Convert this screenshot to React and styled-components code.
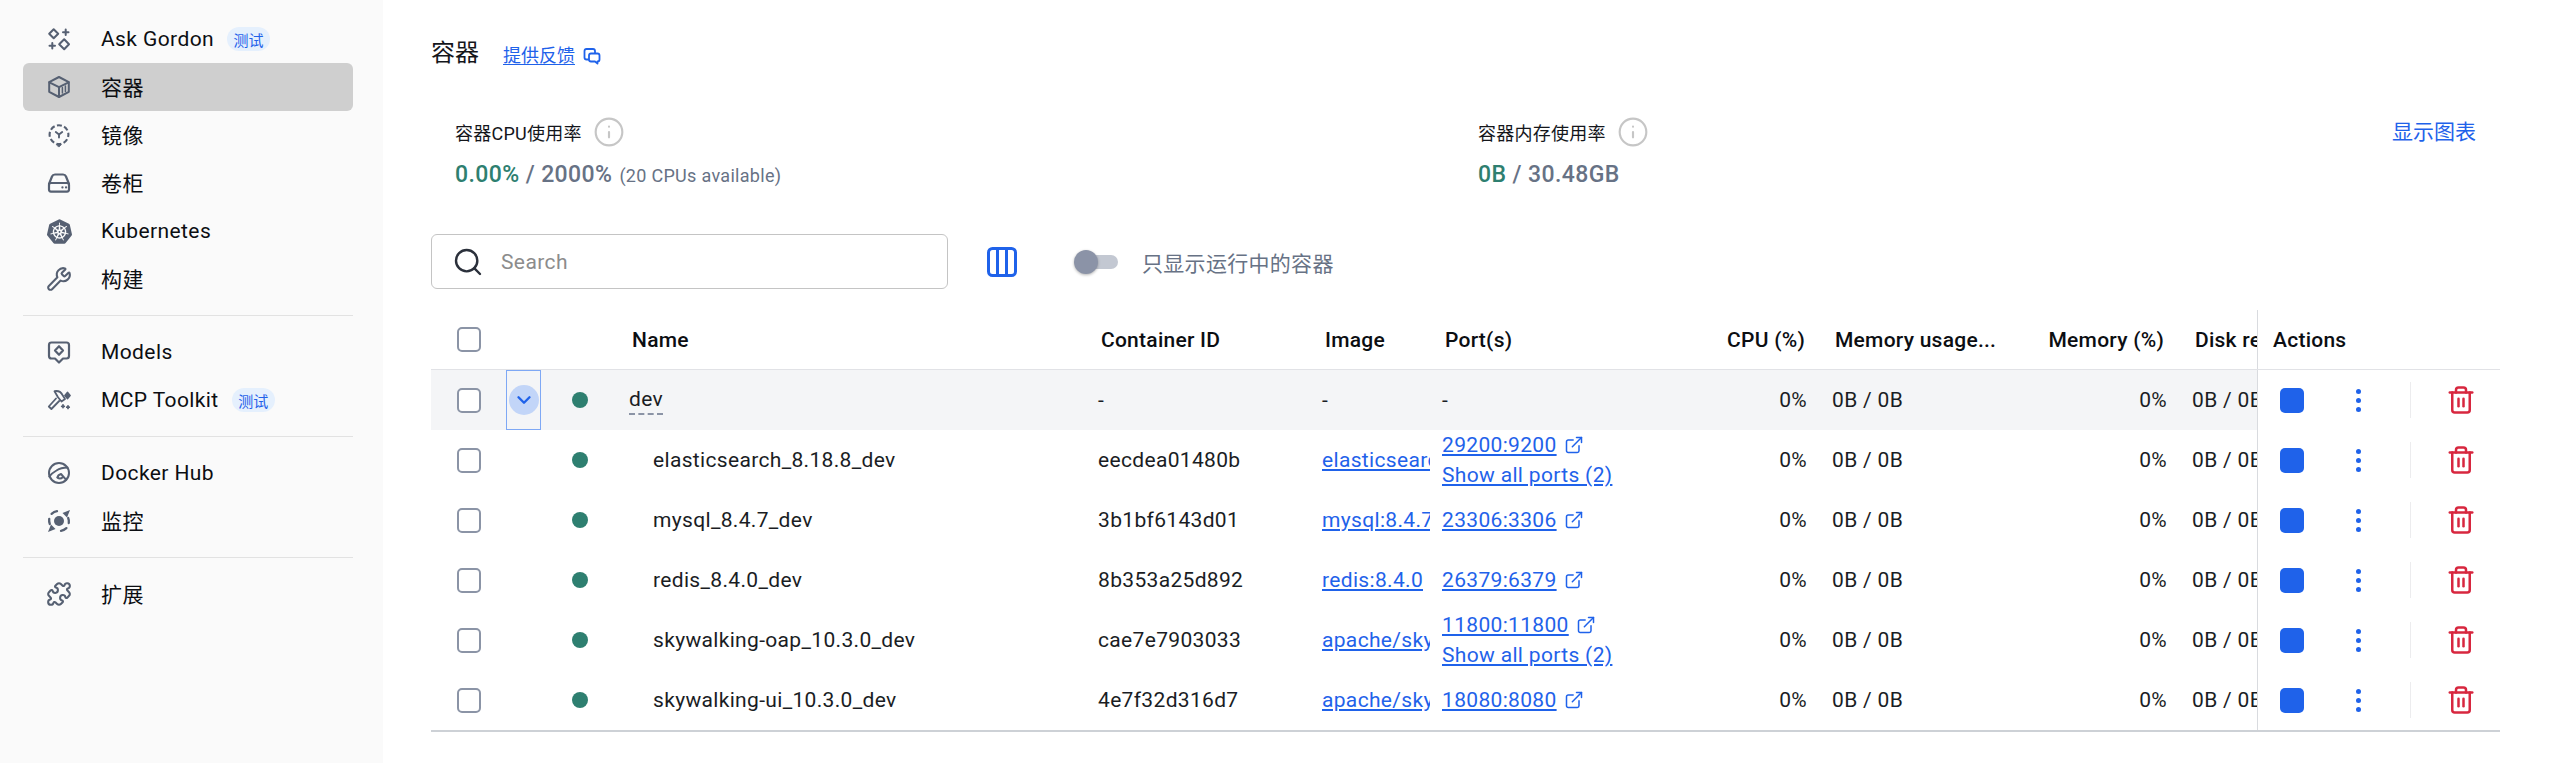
import React from 'react';
import styled, { createGlobalStyle } from 'styled-components';
import { ChevronDown, ExternalLink, Info, Puzzle, Search, Trash2, Wrench } from 'lucide-react';
import { SiKubernetes } from 'react-icons/si';

const BLUE = '#1f62ea';
const GREY = '#677285';
const ICON = '#566072';
const FONT = 'Roboto, "Noto Sans CJK SC", sans-serif';

const GlobalStyle = createGlobalStyle`
  html, body {
    margin: 0;
    padding: 0;
    background: #fff;
    font-family: ${FONT};
    color: #14161b;
  }
  * { box-sizing: border-box; }
`;

const Page = styled.div`
  display: flex;
  width: 2559px;
  height: 763px;
  overflow: hidden;
`;

const Sidebar = styled.nav`
  flex: 0 0 383px;
  padding: 15px 30px 0 23px;
  background: #fafafa;
`;

const NavItem = styled.div`
  display: flex;
  align-items: center;
  height: 48px;
  padding-left: 22px;
  border-radius: 6px;
  background: ${p => (p.$active ? '#cfcfcf' : 'transparent')};
  font-size: 21px;
  letter-spacing: 0.4px;
  color: #0c0e12;
`;

const NavIconBox = styled.span`
  display: flex;
  align-items: center;
  justify-content: center;
  flex: 0 0 28px;
  height: 28px;
  margin-right: 28px;
  color: ${ICON};
`;

const NavLabel = styled.span`
  padding-bottom: ${p => (p.$cjk ? '3px' : '0')};
`;

const Beta = styled.span`
  display: inline-flex;
  align-items: center;
  justify-content: center;
  width: 43px;
  height: 24px;
  margin-left: 13px;
  border-radius: 12px;
  background: #e5f0fd;
  color: ${BLUE};
  font-size: 15px;
  letter-spacing: 0;
`;

const NavDivider = styled.div`
  height: 1px;
  margin: 12px 0;
  background: #e2e2e2;
`;

const Main = styled.main`
  flex: 1;
  min-width: 0;
  padding: 35px 59px 0 48px;
`;

const TitleRow = styled.div`
  display: flex;
  align-items: center;
  height: 36px;
`;

const Title = styled.h1`
  margin: 0 24px 0 0;
  font-size: 24px;
  font-weight: 400;
  line-height: 36px;
`;

const Link = styled.a`
  color: ${BLUE};
  text-decoration: underline;
  text-underline-offset: 2px;
`;

const FeedbackLink = styled(Link)`
  font-size: 18px;
  line-height: 36px;
  margin-top: 5px;
`;

const FeedbackGlyph = styled.svg`
  width: 18px;
  height: 18px;
  margin: 6px 0 0 8px;
  color: ${BLUE};
`;

const Metrics = styled.section`
  display: flex;
  margin-top: 44px;
  padding: 0 24px 0 24px;
`;

const Metric = styled.div`
  flex: 0 0 ${p => p.$width};
`;

const MetricLabel = styled.div`
  display: flex;
  align-items: center;
  height: 34px;
  font-size: 18px;
  letter-spacing: 0.25px;
  color: #14161b;
`;

const InfoIcon = styled(Info)`
  margin-left: 11px;
  color: #c6c6c6;
`;

const MetricValue = styled.div`
  margin-top: 10px;
  line-height: 32px;
  font-size: 23px;
  font-weight: 500;
  color: ${GREY};
  letter-spacing: 0.4px;
  white-space: nowrap;
`;

const Used = styled.span`
  color: #2e7f70;
`;

const MetricNote = styled.span`
  margin-left: 7px;
  font-size: 18px;
  font-weight: 400;
  letter-spacing: 0.3px;
`;

const ChartLink = styled.a`
  margin-left: auto;
  color: ${BLUE};
  font-size: 21px;
  line-height: 34px;
  white-space: nowrap;
`;

const Toolbar = styled.div`
  display: flex;
  align-items: center;
  height: 55px;
  margin-top: 42px;
`;

const SearchBox = styled.label`
  display: flex;
  align-items: center;
  width: 517px;
  height: 55px;
  padding-left: 20px;
  border: 1.5px solid #c4c4c4;
  border-radius: 6px;
  color: #2b303b;
`;

const SearchInput = styled.input`
  flex: 1;
  min-width: 0;
  margin-left: 15px;
  border: 0;
  outline: 0;
  background: transparent;
  font: 400 21px ${FONT};
  letter-spacing: 0.4px;
  &::placeholder { color: #8c8c8c; opacity: 1; }
`;

const ColumnsGlyph = styled.svg`
  flex: 0 0 30px;
  width: 30px;
  height: 30px;
  margin-left: 39px;
  color: ${BLUE};
`;

const Toggle = styled.span`
  position: relative;
  flex: 0 0 36px;
  height: 14px;
  margin-left: 65px;
  border-radius: 7px;
  background: #c3c8d2;
  &::before {
    content: '';
    position: absolute;
    top: -5px;
    left: -8px;
    width: 24px;
    height: 24px;
    border-radius: 50%;
    background: #8b93a7;
    box-shadow: 0 1px 3px rgba(0, 0, 0, 0.3);
  }
`;

const ToggleLabel = styled.span`
  margin-left: 24px;
  font-size: 21px;
  letter-spacing: 0.3px;
  color: ${GREY};
`;

const Table = styled.div`
  margin-top: 21px;
  border-bottom: 2px solid #cdd1d6;
`;

const GRID = '75px 35px 78px 469px 224px 120px 283px 107px 200px 160px 75px 243px';

const Cell = styled.div`
  display: flex;
  align-items: center;
  min-width: 0;
  overflow: hidden;
  white-space: nowrap;
  padding: ${p => (p.$right ? '0 15px 0 0' : `0 ${p.$pr || 0}px 0 10px`)};
  justify-content: ${p => (p.$right ? 'flex-end' : 'flex-start')};
`;

const Row = styled.div`
  display: grid;
  grid-template-columns: ${GRID};
  height: 60px;
  font-size: 21px;
  letter-spacing: 0.33px;
  color: #1a1d24;
  ${Cell} {
    background: ${p => (p.$shaded ? '#f4f5f7' : 'transparent')};
  }
`;

const HeadRow = styled(Row)`
  height: 60px;
  border-bottom: 1px solid #e1e2e6;
  font-weight: 500;
  letter-spacing: 0.25px;
  color: #0c0e12;
  ${Cell} {
    padding-left: 13px;
  }
`;

const HeadRight = styled(Cell)`
  && {
    padding: 0 ${p => p.$pr}px 0 0;
    justify-content: flex-end;
  }
`;

const CheckCell = styled.div`
  display: flex;
  align-items: center;
  padding-left: 26px;
  background: ${p => (p.$shaded ? '#f4f5f7' : 'transparent')};
`;

const Check = styled.input.attrs({ type: 'checkbox' })`
  appearance: none;
  width: 24px;
  height: 25px;
  margin: 0;
  border: 2.5px solid #8b94a6;
  border-radius: 5px;
  background: #fff;
`;

const Expander = styled.div`
  display: flex;
  align-items: center;
  justify-content: center;
  background: #f4f5f7;
  border: 1.5px solid #7ea8f5;
`;

const ExpanderDisc = styled.span`
  display: flex;
  align-items: center;
  justify-content: center;
  width: 30px;
  height: 30px;
  border-radius: 50%;
  background: #c2d5f8;
  color: ${BLUE};
`;

const Blank = styled.div`
  background: ${p => (p.$shaded ? '#f4f5f7' : 'transparent')};
`;

const StatusCell = styled.div`
  display: flex;
  align-items: center;
  padding-left: 31px;
  background: ${p => (p.$shaded ? '#f4f5f7' : 'transparent')};
`;

const Dot = styled.span`
  width: 16px;
  height: 16px;
  border-radius: 50%;
  background: #2e7f70;
`;

const GroupName = styled.span`
  line-height: 27px;
  border-bottom: 2px dashed #8b94a6;
`;

const ChildName = styled.span`
  padding-left: 24px;
`;

const ImageLink = styled(Link)`
  display: block;
  overflow: hidden;
`;

const PortStack = styled.div`
  display: flex;
  flex-direction: column;
  line-height: 30px;
`;

const PortLine = styled.span`
  display: flex;
  align-items: center;
`;

const OpenIcon = styled(ExternalLink)`
  margin-left: 7px;
  color: ${BLUE};
`;

const ActionsCell = styled.div`
  display: flex;
  align-items: center;
  padding-left: 22px;
  border-left: 1px solid #d9dbdf;
  background: #fff;
`;

const ActionsHead = styled(ActionsCell)`
  padding-left: 15px;
`;

const StopButton = styled.span`
  flex: 0 0 24px;
  height: 25px;
  border-radius: 5px;
  background: #1f62ea;
`;

const Kebab = styled.span`
  display: flex;
  flex-direction: column;
  align-items: center;
  gap: 4px;
  width: 40px;
  margin-left: 34px;
  &::before, &::after, & > i {
    content: '';
    display: block;
    width: 5px;
    height: 5px;
    border-radius: 50%;
    background: ${BLUE};
  }
`;

const ActionDivider = styled.span`
  width: 1px;
  height: 36px;
  margin-left: 32px;
  background: #ececee;
`;

const TrashIcon = styled(Trash2)`
  margin-left: 35px;
  color: #d7273f;
`;

const Svg = ({ children, fill = 'none', width = 2 }) => (
  <svg width="28" height="28" viewBox="0 0 28 28" fill={fill} stroke="currentColor" strokeWidth={width} strokeLinecap="round" strokeLinejoin="round">
    {children}
  </svg>
);

const GordonIcon = () => (
  <Svg>
    <path d="M8.7 4.2 13.2 8.7 8.7 13.2 4.2 8.7Z" />
    <path d="M19.2 14.2 24 19.2 19.2 24.2 14.2 19.2Z" />
    <path d="M20.7 4.5v5.5M18 7.3h5.5M7.3 18v5.5M4.5 20.7H10" />
  </Svg>
);

const ContainerIcon = () => (
  <Svg>
    <path d="M14 4 23.8 9.2V18.8L14 24 4.2 18.8V9.2Z" />
    <path d="M4.4 9.3 14 14.2 23.6 9.3M14 14.2V23.8" />
    <path d="M17.4 14.6V20M20.4 13V18.5" strokeWidth="1.5" />
  </Svg>
);

const ImageIcon = () => (
  <Svg>
    <circle cx="14" cy="13.6" r="9.4" strokeLinecap="butt" strokeDasharray="5 2.4" strokeDashoffset="2.5" strokeWidth="2.1" />
    <path d="M10.8 11 14 13.4 17.2 11M14 13.4V16.6" strokeWidth="1.9" />
    <path d="M11.8 23.6h4.4L14 25.8Z" fill="currentColor" strokeWidth="1" />
  </Svg>
);

const VolumeIcon = () => (
  <Svg width={2.2}>
    <path d="M4 15 7 7.5Q7.8 5.5 10 5.5H18Q20.2 5.5 21 7.5L24 15" />
    <rect x="4" y="14" width="20" height="8.6" rx="2" />
    <path d="M17.4 18.4h.1M21 18.4h.1" />
  </Svg>
);

const ModelsIcon = () => (
  <Svg width={2.2}>
    <path d="M6.5 4.5H21.5Q24 4.5 24 7V18Q24 20.5 21.5 20.5H18L14 24.5 10 20.5H6.5Q4 20.5 4 18V7Q4 4.5 6.5 4.5Z" />
    <path d="M14 8.2 18 12.5 14 16.8 10 12.5Z" />
  </Svg>
);

const ToolkitIcon = () => (
  <Svg width={1.8}>
    <path d="M9.5 5.2Q15 4.2 17.5 9L20 13 16.5 15.5 13 11.2Z" />
    <path d="M11 12.5 3.8 20.5 6.4 23 14.2 15" />
    <path d="M22.5 6.5 25 9.5 22.5 12.5 20 9.5Z" fill="currentColor" />
    <path d="M18 19v2.6M16.7 20.3h2.6M23 20v2.4M21.8 21.2h2.4" />
  </Svg>
);

const HubIcon = () => (
  <Svg width={2}>
    <circle cx="14" cy="14" r="10" />
    <path d="M22.5 8.5Q16 8.5 11.5 11.5 7 14 4.3 17.5" />
    <path d="M12.5 18.5Q13 15.8 16 15L21.2 20.8" />
    <path d="M12.5 18.5Q15 20.8 18 18" />
  </Svg>
);

const MonitorIcon = () => (
  <Svg width={2.3}>
    <circle cx="14" cy="14" r="5" fill="currentColor" stroke="none" />
    <path d="M6.6 6.9Q9 4.7 12 4.2M21.4 21.1Q19 23.3 16 23.8M4.2 12Q3.9 15 4.8 17M23.8 16Q24.1 13 23.2 11" />
    <path d="M17.5 6 25 3 22 10.5Z" fill="currentColor" stroke="none" />
    <path d="M3 25 6 17.5 10.5 22Z" fill="currentColor" stroke="none" />
  </Svg>
);

const navGroups = [
  [
    { label: 'Ask Gordon', icon: <GordonIcon />, beta: true },
    { label: '容器', icon: <ContainerIcon />, active: true, cjk: true },
    { label: '镜像', icon: <ImageIcon />, cjk: true },
    { label: '卷柜', icon: <VolumeIcon />, cjk: true },
    { label: 'Kubernetes', icon: <SiKubernetes size={25} /> },
    { label: '构建', icon: <Wrench size={26} strokeWidth={1.9} />, cjk: true },
  ],
  [
    { label: 'Models', icon: <ModelsIcon /> },
    { label: 'MCP Toolkit', icon: <ToolkitIcon />, beta: true },
  ],
  [
    { label: 'Docker Hub', icon: <HubIcon /> },
    { label: '监控', icon: <MonitorIcon />, cjk: true },
  ],
  [{ label: '扩展', icon: <Puzzle size={26} strokeWidth={1.9} />, cjk: true }],
];

const containers = [
  { name: 'elasticsearch_8.18.8_dev', id: 'eecdea01480b', image: 'elasticsearch:8.18.8', port: '29200:9200', more: true },
  { name: 'mysql_8.4.7_dev', id: '3b1bf6143d01', image: 'mysql:8.4.7', port: '23306:3306' },
  { name: 'redis_8.4.0_dev', id: '8b353a25d892', image: 'redis:8.4.0', port: '26379:6379' },
  { name: 'skywalking-oap_10.3.0_dev', id: 'cae7e7903033', image: 'apache/skywalking-oap-server:10.3.0', port: '11800:11800', more: true },
  { name: 'skywalking-ui_10.3.0_dev', id: '4e7f32d316d7', image: 'apache/skywalking-ui:10.3.0', port: '18080:8080' },
];

const Actions = () => (
  <ActionsCell>
    <StopButton />
    <Kebab><i /></Kebab>
    <ActionDivider />
    <TrashIcon size={30} strokeWidth={2} />
  </ActionsCell>
);

const Usage = () => (
  <>
    <Cell $right>0%</Cell>
    <Cell>0B / 0B</Cell>
    <Cell $right>0%</Cell>
    <Cell>0B / 0B</Cell>
  </>
);

export default function App() {
  return (
    <Page>
      <GlobalStyle />
      <Sidebar>
        {navGroups.map((group, i) => (
          <React.Fragment key={i}>
            {i > 0 && <NavDivider />}
            {group.map(item => (
              <NavItem key={item.label} $active={item.active}>
                <NavIconBox>{item.icon}</NavIconBox>
                <NavLabel $cjk={item.cjk}>{item.label}</NavLabel>
                {item.beta && <Beta>测试</Beta>}
              </NavItem>
            ))}
          </React.Fragment>
        ))}
      </Sidebar>

      <Main>
        <TitleRow>
          <Title>容器</Title>
          <FeedbackLink>提供反馈</FeedbackLink>
          <FeedbackGlyph viewBox="0 0 18 18" fill="none" stroke="currentColor" strokeWidth="1.8" strokeLinejoin="round">
            <path d="M6 12.5H3.5Q1.5 12.5 1.5 10.5V4Q1.5 2 3.5 2H10Q12 2 12 4V6" />
            <path d="M8 6.5H14.5Q16.5 6.5 16.5 8.5V12.5Q16.5 14.5 14.5 14.5V16.5L12 14.5H8Q6 14.5 6 12.5V8.5Q6 6.5 8 6.5Z" />
          </FeedbackGlyph>
        </TitleRow>

        <Metrics>
          <Metric $width="1023px">
            <MetricLabel>容器CPU使用率<InfoIcon size={32} strokeWidth={1.6} /></MetricLabel>
            <MetricValue><Used>0.00%</Used> / 2000%<MetricNote>(20 CPUs available)</MetricNote></MetricValue>
          </Metric>
          <Metric $width="auto">
            <MetricLabel>容器内存使用率<InfoIcon size={32} strokeWidth={1.6} /></MetricLabel>
            <MetricValue><Used>0B</Used> / 30.48GB</MetricValue>
          </Metric>
          <ChartLink>显示图表</ChartLink>
        </Metrics>

        <Toolbar>
          <SearchBox>
            <Search size={32} strokeWidth={1.8} />
            <SearchInput placeholder="Search" />
          </SearchBox>
          <ColumnsGlyph viewBox="0 0 30 30" fill="none" stroke="currentColor" strokeWidth="3">
            <rect x="1.5" y="1.5" width="27" height="27" rx="4" />
            <path d="M10.5 2V28M19.5 2V28" />
          </ColumnsGlyph>
          <Toggle />
          <ToggleLabel>只显示运行中的容器</ToggleLabel>
        </Toolbar>

        <Table>
          <HeadRow>
            <CheckCell><Check /></CheckCell>
            <Blank />
            <Blank />
            <Cell>Name</Cell>
            <Cell>Container ID</Cell>
            <Cell>Image</Cell>
            <Cell>Port(s)</Cell>
            <HeadRight $pr={17}>CPU (%)</HeadRight>
            <Cell>Memory usage...</Cell>
            <HeadRight $pr={18}>Memory (%)</HeadRight>
            <Cell>Disk read/write</Cell>
            <ActionsHead>Actions</ActionsHead>
          </HeadRow>

          <Row $shaded>
            <CheckCell $shaded><Check /></CheckCell>
            <Expander><ExpanderDisc><ChevronDown size={22} strokeWidth={2.6} /></ExpanderDisc></Expander>
            <StatusCell $shaded><Dot /></StatusCell>
            <Cell><GroupName>dev</GroupName></Cell>
            <Cell>-</Cell>
            <Cell>-</Cell>
            <Cell>-</Cell>
            <Usage />
            <Actions />
          </Row>

          {containers.map(c => (
            <Row key={c.id}>
              <CheckCell><Check /></CheckCell>
              <Blank />
              <StatusCell><Dot /></StatusCell>
              <Cell><ChildName>{c.name}</ChildName></Cell>
              <Cell>{c.id}</Cell>
              <Cell $pr={2}><ImageLink>{c.image}</ImageLink></Cell>
              <Cell>
                <PortStack>
                  <PortLine><Link>{c.port}</Link><OpenIcon size={20} strokeWidth={1.8} /></PortLine>
                  {c.more && <Link>Show all ports (2)</Link>}
                </PortStack>
              </Cell>
              <Usage />
              <Actions />
            </Row>
          ))}
        </Table>
      </Main>
    </Page>
  );
}
